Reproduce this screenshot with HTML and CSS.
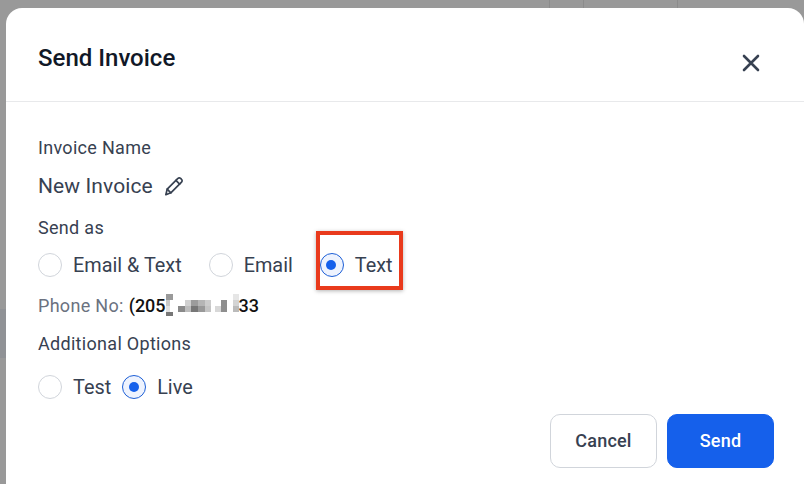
FILE: index.html
```html
<!DOCTYPE html>
<html lang="en">
<head>
    <meta charset="UTF-8">
    <meta name="viewport" content="width=device-width, initial-scale=1.0">
    <title>Send Invoice</title>
    <link rel="stylesheet" href="styles.css">
</head>
<body>
    <div class="backdrop-lines">
        <span class="line line-a"></span>
        <span class="line line-b"></span>
        <span class="line line-c"></span>
        <span class="side-strip"></span>
    </div>
    <main class="modal">
        <header class="modal-head">
            <h1>Send Invoice</h1>
            <button class="close-btn" aria-label="Close">
                <svg width="18" height="18" viewBox="0 0 18 18"><path d="M2 2 L16 16 M16 2 L2 16" stroke="#374151" stroke-width="2.6" stroke-linecap="round" fill="none"/></svg>
            </button>
        </header>
        <section class="modal-body">
            <p class="label label-name">Invoice Name</p>
            <div class="name-row">
                <span>New Invoice</span>
                <svg width="21" height="21" viewBox="0 0 22 22" fill="none" stroke="#374151" stroke-width="1.8" stroke-linejoin="round" stroke-linecap="round"><path d="M15.6 2.6 a2 2 0 0 1 2.9 0 l0.9 0.9 a2 2 0 0 1 0 2.9 L8.2 17.6 L3 19.6 L4.4 13.8 Z"/><path d="M13.6 4.6 L17.4 8.4"/><path d="M4.4 13.8 L8.2 17.6"/></svg>
            </div>
            <p class="label label-send">Send as</p>
            <div class="radio-row">
                <label class="radio"><span class="dot"></span>Email &amp; Text</label>
                <label class="radio"><span class="dot"></span>Email</label>
                <label class="radio marked"><span class="dot on"></span>Text</label>
            </div>
            <p class="phone">Phone No: <b>(205<svg class="blur" width="73" height="24" viewBox="0 0 73 24" shape-rendering="crispEdges">
                <rect x="0" y="0" width="7" height="6" fill="#9a9a9a"/>
                <rect x="0" y="6" width="4" height="6" fill="#c9c9c9"/>
                <rect x="0" y="12" width="4" height="6" fill="#e2e2e2"/>
                <rect x="0" y="18" width="7" height="4" fill="#777"/>
                <rect x="12" y="12" width="7" height="6" fill="#8a8a8a"/><rect x="19" y="6" width="6" height="6" fill="#d0d0d0"/><rect x="19" y="12" width="6" height="6" fill="#bdbdbd"/>
                <rect x="25" y="6" width="7" height="6" fill="#9c9c9c"/><rect x="25" y="12" width="7" height="6" fill="#777"/>
                <rect x="32" y="6" width="7" height="6" fill="#b5b5b5"/><rect x="32" y="12" width="7" height="6" fill="#999"/>
                <rect x="39" y="6" width="6" height="6" fill="#ccc"/><rect x="39" y="12" width="6" height="6" fill="#c4c4c4"/>
                <rect x="49" y="12" width="6" height="6" fill="#d8d8d8"/><rect x="55" y="6" width="6" height="12" fill="#8e8e8e"/>
                <rect x="67" y="0" width="6" height="6" fill="#e6e6e6"/><rect x="67" y="6" width="6" height="6" fill="#d4d4d4"/><rect x="67" y="12" width="6" height="6" fill="#bbb"/>
            </svg>33</b></p>
            <p class="label label-extra">Additional Options</p>
            <div class="radio-row tight">
                <label class="radio"><span class="dot"></span>Test</label>
                <label class="radio"><span class="dot on"></span>Live</label>
            </div>
        </section>
        <footer class="modal-foot">
            <button class="btn btn-cancel">Cancel</button>
            <button class="btn btn-send">Send</button>
        </footer>
    </main>
</body>
</html>
```

FILE: styles.css
```css
* {
    margin: 0;
    padding: 0;
    box-sizing: border-box;
}
html, body {
    height: 484px;
    overflow: hidden;
}
body {
    background-color: #999999;
    font-family: Roboto, "Liberation Sans", sans-serif;
    color: #374151;
    position: relative;
}
.backdrop-lines .line {
    position: absolute;
    top: 0;
    width: 1px;
    height: 8px;
    background-color: #8c8c8c;
}
.line-a { left: 549px; }
.line-b { left: 583px; }
.line-c { left: 677px; }
.side-strip {
    position: absolute;
    left: 0;
    top: 309px;
    width: 6px;
    height: 49px;
    background-color: #909296;
}
.modal {
    position: relative;
    margin: 8px 0 0 6px;
    width: 798px;
    height: 476px;
    background-color: #ffffff;
    border-radius: 16px 16px 0 0;
}
.modal-head {
    height: 94px;
    border-bottom: 1px solid #e8e9eb;
    padding: 0 32px;
    display: flex;
    justify-content: space-between;
}
.modal-head h1 {
    font-size: 24px;
    font-weight: 500;
    line-height: 28px;
    color: #111827;
    margin-top: 36px;
}
.close-btn {
    border: none;
    background: none;
    width: 18px;
    height: 18px;
    margin: 46px 12px 0 0;
}
.modal-body {
    padding: 0 32px;
}
.label {
    font-size: 18px;
    line-height: 24px;
    letter-spacing: 0.3px;
}
.label-name { margin-top: 34px; }
.name-row {
    display: flex;
    align-items: center;
    gap: 10px;
    margin-top: 10px;
    height: 32px;
    font-size: 21px;
    letter-spacing: 0.1px;
}
.label-send { margin-top: 14px; }
.radio-row {
    display: flex;
    gap: 27px;
    margin-top: 13px;
}
.radio-row.tight { gap: 11px; margin-top: 19px; }
.radio {
    position: relative;
    display: flex;
    align-items: center;
    gap: 11px;
    height: 24px;
    font-size: 19.85px;
}
.dot {
    width: 24px;
    height: 24px;
    border-radius: 50%;
    border: 1px solid #d1d5db;
    background-color: #ffffff;
}
.dot.on {
    border: 1.5px solid #1d5fd6;
    background-color: #eef3fe;
    position: relative;
}
.dot.on::after {
    content: "";
    position: absolute;
    left: 5.5px;
    top: 5.5px;
    width: 10px;
    height: 10px;
    border-radius: 50%;
    background-color: #1560eb;
}
.marked::after {
    content: "";
    box-sizing: border-box;
    position: absolute;
    left: -4px;
    top: -22px;
    width: 87px;
    height: 59px;
    border: 4px solid #e93a1c;
    box-shadow: 0 1px 4px rgba(0, 0, 0, 0.3);
}
.phone {
    margin-top: 17px;
    font-size: 18px;
    line-height: 24px;
    letter-spacing: 0.3px;
    color: #6b7280;
    white-space: nowrap;
    display: flex;
    gap: 5px;
}
.phone b {
    font-weight: 500;
    letter-spacing: 0;
    color: #111111;
    display: flex;
    align-items: center;
}
.blur {
    flex: none;
}
.label-extra { margin-top: 14px; }
.modal-foot {
    position: absolute;
    right: 30px;
    top: 406px;
    display: flex;
    gap: 10px;
}
.btn {
    width: 107px;
    height: 54px;
    border-radius: 10px;
    font-family: inherit;
    font-size: 18px;
    font-weight: 500;
    letter-spacing: 0.2px;
    padding-bottom: 2px;
}
.btn-cancel {
    background-color: #ffffff;
    border: 1px solid #d1d5db;
    color: #374151;
}
.btn-send {
    background-color: #1560eb;
    border: 1px solid #1560eb;
    color: #ffffff;
}
```
